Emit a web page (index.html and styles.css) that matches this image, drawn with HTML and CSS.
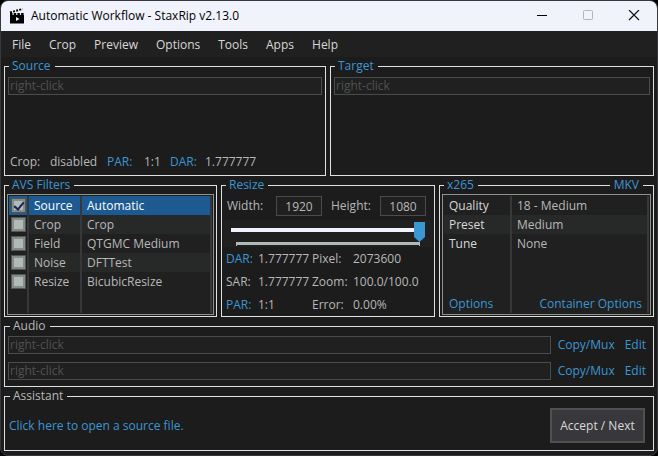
FILE: index.html
```html
<!DOCTYPE html>
<html lang="en">
<head>
  <meta charset="UTF-8"/>
  <meta name="viewport" content="width=device-width, initial-scale=1.0"/>
  <title>Automatic Workflow - StaxRip v2.13.0</title>
  <link rel="stylesheet" href="styles.css">
</head>
<body>
<div class="window">

  <!-- Title bar -->
  <header class="titlebar">
    <svg class="app-icon" width="16" height="16" viewBox="0 0 16 16">
      <path d="M1 7h14v8.500H1z" fill="#000"/>
      <path d="M1 4.500L13.500 1" stroke="#000" stroke-width="2" stroke-dasharray="2 1.200"/>
      <path d="M1 6h14" stroke="#000" stroke-width="2" stroke-dasharray="2.500 1.200"/>
      <path d="M7 9l3.500 2-3.500 2z" fill="#f0f3fb"/>
    </svg>
    <h1 class="title">Automatic Workflow - StaxRip v2.13.0</h1>
    <button class="win-btn" aria-label="Minimize"><svg width="12" height="12" viewBox="0 0 12 12"><path d="M1 5.500h10" stroke="#000"/></svg></button>
    <button class="win-btn" aria-label="Maximize" disabled><svg width="12" height="12" viewBox="0 0 12 12"><rect x="1.500" y=".5" width="9" height="9" rx="1" fill="none" stroke="#b4b6bb"/></svg></button>
    <button class="win-btn" aria-label="Close"><svg width="12" height="12" viewBox="0 0 12 12"><path d="M1 0l10 10M11 0L1 10" stroke="#111" stroke-width="1.200"/></svg></button>
  </header>

  <nav class="menu">
    <button>File</button>
    <button>Crop</button>
    <button>Preview</button>
    <button>Options</button>
    <button>Tools</button>
    <button>Apps</button>
    <button>Help</button>
  </nav>

  <main class="main">

    <!-- Source / Target -->
    <div class="row files">
      <fieldset class="group source">
        <legend><a href="#">Source</a></legend>
        <input class="box path" type="text" placeholder="right-click" aria-label="Source file">
        <div class="source-info">
          <span>Crop:</span><span>disabled</span>
          <a href="#">PAR:</a><span>1:1</span>
          <a href="#">DAR:</a><span>1.777777</span>
        </div>
      </fieldset>
      <fieldset class="group">
        <legend><a href="#">Target</a></legend>
        <input class="box path" type="text" placeholder="right-click" aria-label="Target file">
      </fieldset>
    </div>

    <!-- Filters / Resize / Encoder -->
    <div class="row settings">
      <fieldset class="group list">
        <legend><a href="#">AVS Filters</a></legend>
        <table class="grid filters">
          <tr class="selected"><td><input type="checkbox" id="f1" checked></td><td><label for="f1">Source</label></td><td>Automatic</td></tr>
          <tr><td><input type="checkbox" id="f2"></td><td><label for="f2">Crop</label></td><td>Crop</td></tr>
          <tr><td><input type="checkbox" id="f3"></td><td><label for="f3">Field</label></td><td>QTGMC Medium</td></tr>
          <tr><td><input type="checkbox" id="f4"></td><td><label for="f4">Noise</label></td><td>DFTTest</td></tr>
          <tr><td><input type="checkbox" id="f5"></td><td><label for="f5">Resize</label></td><td>BicubicResize</td></tr>
          <tr class="rest"><td></td><td></td><td></td></tr>
        </table>
      </fieldset>

      <fieldset class="group resize">
        <legend><a href="#">Resize</a></legend>
        <div class="size">
          <label for="width">Width:</label><input class="box" type="text" id="width" value="1920">
          <label for="height">Height:</label><input class="box" type="text" id="height" value="1080">
        </div>
        <div class="slider">
          <input type="range" min="0" max="100" value="100" aria-label="Size">
          <div class="ticks"></div>
        </div>
        <div class="stats">
          <a href="#">DAR:</a><span>1.777777</span><span>Pixel:</span><span>2073600</span>
          <span>SAR:</span><span>1.777777</span><span>Zoom:</span><span>100.0/100.0</span>
          <a href="#">PAR:</a><span>1:1</span><span>Error:</span><span>0.00%</span>
        </div>
      </fieldset>

      <fieldset class="group list">
        <legend><a href="#">x265</a></legend>
        <a class="muxer" href="#">MKV</a>
        <table class="grid encoder">
          <tr><th scope="row">Quality</th><td>18 - Medium</td></tr>
          <tr><th scope="row">Preset</th><td>Medium</td></tr>
          <tr><th scope="row">Tune</th><td>None</td></tr>
          <tr class="rest"><td><a href="#">Options</a></td><td><a href="#">Container Options</a></td></tr>
        </table>
      </fieldset>
    </div>

    <fieldset class="group audio">
      <legend>Audio</legend>
      <div class="track">
        <input class="box path" type="text" placeholder="right-click" aria-label="Audio track 1">
        <a href="#">Copy/Mux</a><a href="#">Edit</a>
      </div>
      <div class="track">
        <input class="box path" type="text" placeholder="right-click" aria-label="Audio track 2">
        <a href="#">Copy/Mux</a><a href="#">Edit</a>
      </div>
    </fieldset>

    <fieldset class="group assistant">
      <legend>Assistant</legend>
      <div class="assist">
        <a href="#">Click here to open a source file.</a>
        <button class="next">Accept / Next</button>
      </div>
    </fieldset>

  </main>
</div>
</body>
</html>
```
FILE: styles.css
```css
*, *::after { box-sizing: border-box; }
html { background: #000; }
body { margin: 0; font: 12px/18px "Open Sans", "Noto Sans", sans-serif; color: #b8b8b8; }
button, input { font: inherit; color: inherit; margin: 0; }
a { color: #3c96d2; text-decoration: none; }

.window {
  display: flex;
  flex-direction: column;
  min-height: 100vh;
  background: #1c1c1c;
  border: 1px solid #38383c;
  border-radius: 8px;
  overflow: hidden;
}

.titlebar {
  display: flex;
  align-items: center;
  height: 30px;
  padding-left: 8px;
  background: #f0f3fb;
  color: #000;
}
.title { flex: 1; margin: 0 0 0 6px; font-size: 12px; font-weight: normal; }
.win-btn {
  display: flex;
  align-items: center;
  justify-content: center;
  width: 46px;
  height: 30px;
  padding: 0;
  border: 0;
  background: none;
}

.menu { display: flex; height: 26px; padding: 2px 0 0 2px; background: #202020; }
.menu button { padding: 0 9px; border: 0; background: none; color: #d8d8d8; }

.main { flex: 1; display: flex; flex-direction: column; padding: 0 3px 4px; }
.row { display: grid; gap: 4px; }
.files { flex: 1; grid-template-columns: 322fr 324fr; }
.settings { grid-template-columns: 213fr 214fr 215fr; }

.group {
  position: relative;
  min-width: 0;
  margin: 0;
  padding: 2px 3px 4px;
  border: 1px solid #e0e0e0;
}
.group legend { margin-left: 1px; padding: 0 4px 0 3px; }
.group.list { padding: 0 2px 1px; }
.list legend { margin-left: 2px; }
.muxer {
  position: absolute;
  top: -18px;
  right: 10px;
  padding: 0 4px;
  background: #1c1c1c;
}

.box {
  display: block;
  width: 100%;
  height: 18px;
  padding: 0;
  border: 1px solid #4b4b4b;
  border-radius: 0;
  background: #202020;
}
.path { padding-left: 1px; }
.box::placeholder { color: #505050; opacity: 1; }

.source { display: flex; flex-direction: column; }
.source-info {
  display: grid;
  grid-template-columns: 40px 57px 37px 26px 35px auto;
  margin-top: auto;
  padding-left: 2px;
}

/* filter and encoder lists */
.grid {
  width: 100%;
  height: 121px;
  padding: 1px;
  border: 1px solid #8c948e;
  border-collapse: separate;
  border-spacing: 0;
  table-layout: fixed;
  background: #202020;
}
.grid tr { height: 19px; }
.grid tr.rest { height: auto; }
.grid td, .grid th {
  padding: 0 5px;
  border-right: 2px solid #38383c;
  font-weight: normal;
  text-align: left;
  white-space: nowrap;
  line-height: 18px;
}
.grid tr:nth-child(even):not(.rest) td, .encoder tr:nth-child(even) th { background: #272929; }
.filters td:nth-child(1) { width: 20px; padding: 0 0 0 2px; }
.filters td:nth-child(2) { width: 53px; }
.grid.filters tr:nth-child(even) td:first-child { background: none; }
.filters .selected td { background: #1c5a91; color: #fff; background-clip: padding-box; }
.filters input {
  appearance: none;
  display: block;
  position: relative;
  width: 15px;
  height: 15px;
  border: 1px solid #505652;
  background: #b0bab7;
  box-shadow: inset 0 0 0 2px #848d86;
}
.filters input:checked::after {
  content: "";
  position: absolute;
  left: 4px;
  top: 1px;
  width: 6px;
  height: 10px;
  border: solid #1e1e5a;
  border-width: 0 2px 2px 0;
  transform: rotate(40deg);
}
.encoder th { width: 68px; color: #d8d8d8; }
.encoder .rest td { vertical-align: bottom; }
.encoder .rest td:last-child { text-align: right; }

.group.resize { padding: 2px 1px 0; }
.resize legend { margin-left: 3px; }
.size {
  display: grid;
  grid-template-columns: 49px 55px 49px 46px;
  align-items: center;
  padding-left: 4px;
}
.size .box { width: 46px; height: 20px; text-align: center; }
.slider { height: 27px; margin-top: 4px; padding: 2px 8px 0; background: #202020; }
.slider input {
  appearance: none;
  display: block;
  width: 100%;
  height: 20px;
  background: linear-gradient(#f0f3fb, #f0f3fb) 0 6px / 100% 4px no-repeat;
}
.slider input::-webkit-slider-thumb {
  appearance: none;
  width: 11px;
  height: 20px;
  background: #3c96d2;
  clip-path: polygon(0 0, 100% 0, 100% 75%, 50% 100%, 0 75%);
}
.ticks {
  height: 4px;
  margin: 0 5px;
  border: solid #b0bab7;
  border-width: 3px 1px 0;
}
.stats {
  display: grid;
  grid-template-columns: 32px 54px 41px auto;
  grid-auto-rows: 23px;
  align-items: center;
  padding-left: 3px;
}

.group.audio { padding: 1px 4px 6px 3px; }
.track { display: flex; align-items: center; }
.track + .track { margin-top: 8px; }
.track .path { flex: 1; min-width: 0; }
.track a { margin: 0 3px 0 7px; }
.audio legend, .assistant legend { margin-left: 2px; }

.assist { display: flex; align-items: center; justify-content: space-between; padding: 1px 5px 3px 1px; }
.next {
  height: 35px;
  width: 95px;
  padding: 0;
  border: 2px solid #505050;
  background: #38383c;
  color: #d8d8d8;
  white-space: nowrap;
}
```
